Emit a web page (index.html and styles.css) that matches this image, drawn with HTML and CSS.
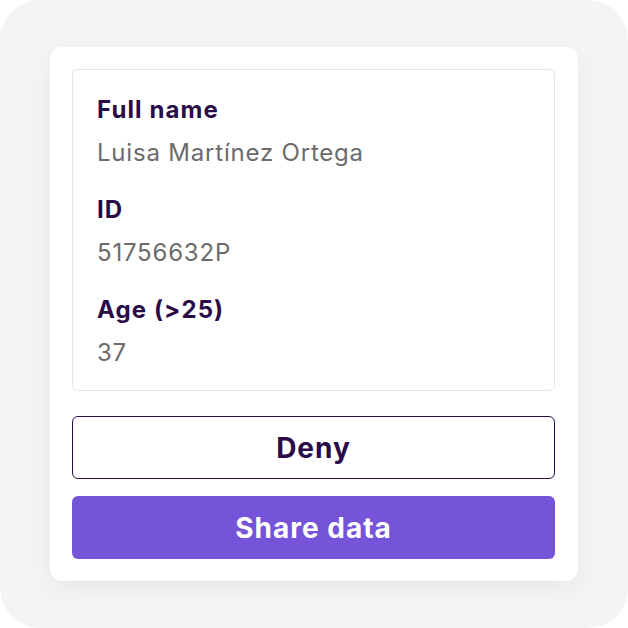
FILE: index.html
```html
<!DOCTYPE html>
<html>
<head>
<meta charset="utf-8">
<link rel="stylesheet" href="styles.css">
</head>
<body>
<div class="frame">
  <div class="card">
    <div class="fields">
      <div class="field">
        <div class="label">Full name</div>
        <div class="value">Luisa Martínez Ortega</div>
      </div>
      <div class="field">
        <div class="label">ID</div>
        <div class="value">51756632P</div>
      </div>
      <div class="field">
        <div class="label">Age (&gt;25)</div>
        <div class="value">37</div>
      </div>
    </div>
    <button class="btn deny">Deny</button>
    <button class="btn share">Share data</button>
  </div>
</div>
</body>
</html>
```
FILE: styles.css
```css
html, body { margin: 0; padding: 0; background: #fff; }
body { font-family: "Inter", "Lato", sans-serif; }
.frame {
  width: 628px; height: 628px; box-sizing: border-box;
  background: #f4f4f5; border-radius: 40px;
  padding: 47px 50px 0 50px;
}
.card {
  background: #fff; border-radius: 12px;
  width: 528px; height: 534px; box-sizing: border-box;
  padding: 22px 23px 22px 22px;
  display: flex; flex-direction: column;
  box-shadow: 0 8px 24px rgba(0,0,0,0.05);
}
.fields {
  border: 1px solid #e6e6e6; border-radius: 6px;
  height: 322px; box-sizing: border-box;
  padding: 25px 24px;
  display: flex; flex-direction: column; gap: 28px;
}
.label { color: #2a0b48; font-weight: 700; font-size: 24px; line-height: 29px; letter-spacing: 1.1px; }
.value { color: #6b6b6b; font-size: 24px; line-height: 29px; margin-top: 14px; letter-spacing: 0.8px; }
.btn {
  font-family: inherit; font-weight: 700; font-size: 28px;
  height: 63px; border-radius: 6px; width: 100%;
  display: flex; align-items: center; justify-content: center;
  letter-spacing: 1px;
}
.deny { margin-top: 25px; background: #fff; border: 1px solid #2d0d45; color: #2a0b48; }
.share { margin-top: 17px; background: #7554d9; border: none; color: #fff; }
```
